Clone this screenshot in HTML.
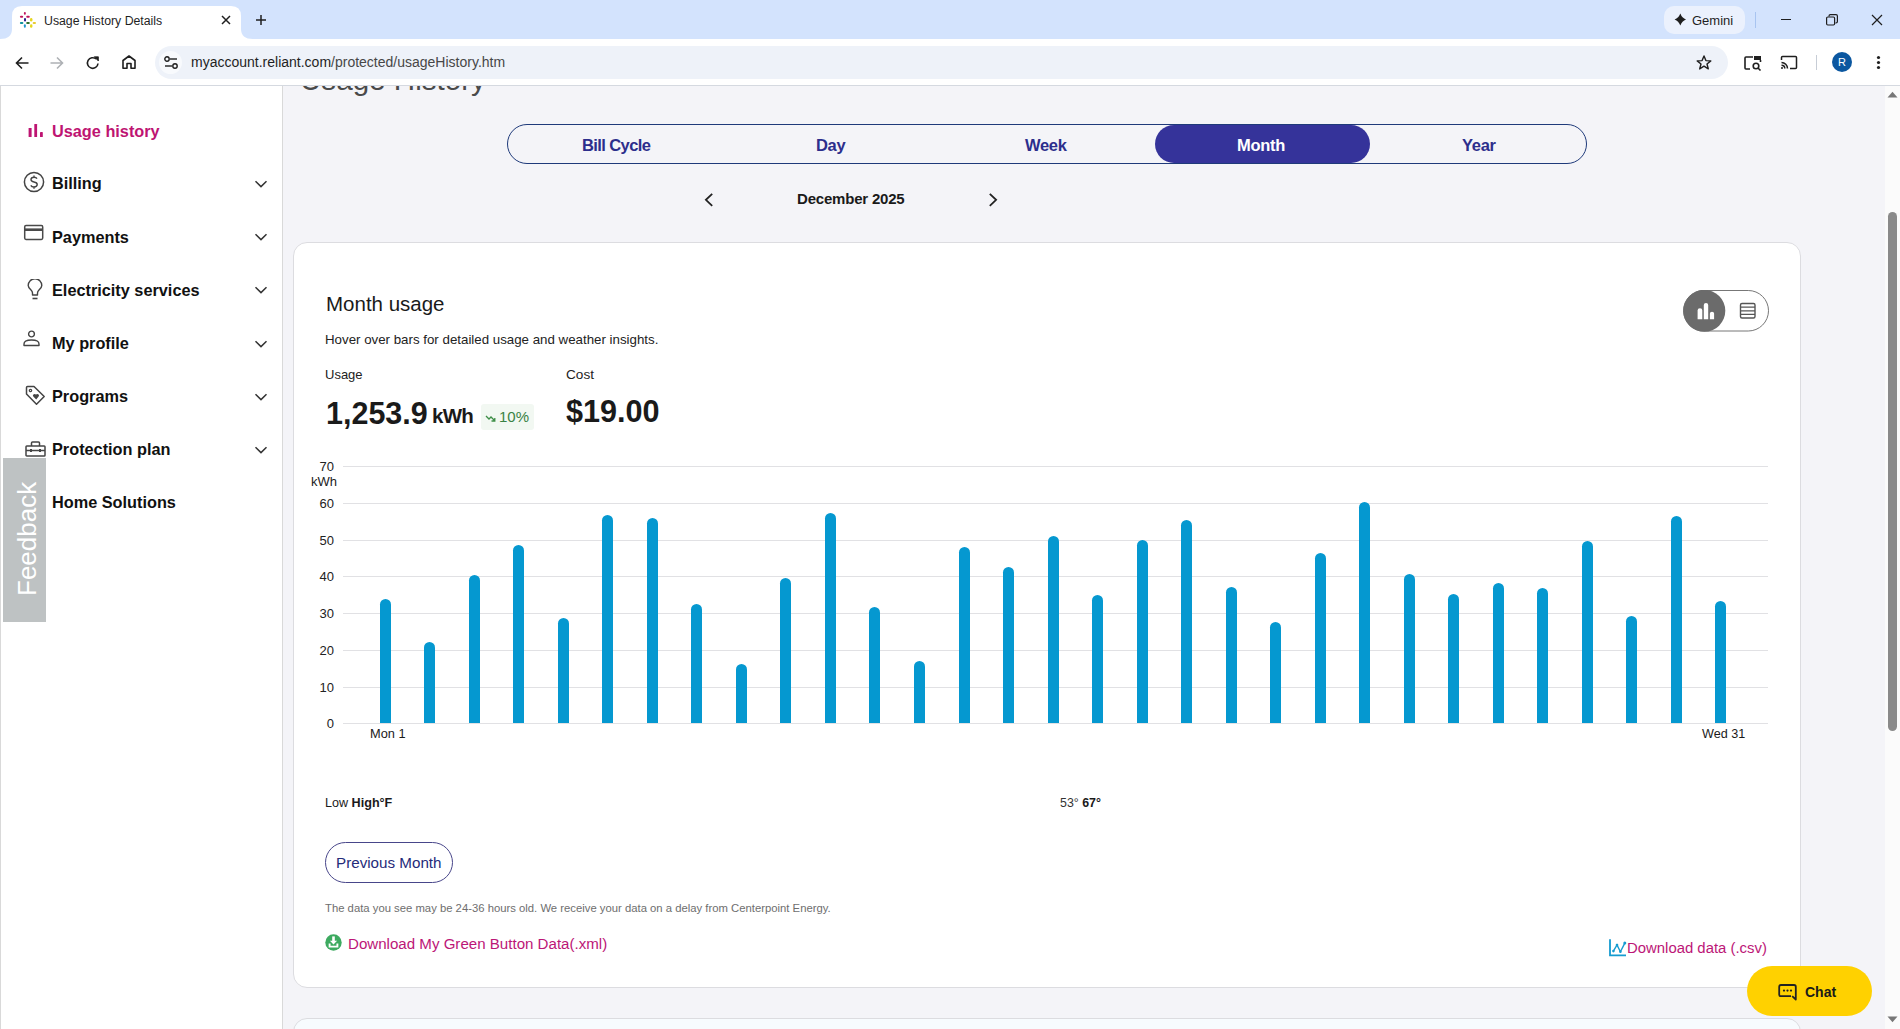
<!DOCTYPE html>
<html><head><meta charset="utf-8">
<style>
*{box-sizing:border-box;margin:0;padding:0}
html,body{width:1900px;height:1029px;overflow:hidden;background:#fff;font-family:"Liberation Sans",sans-serif;}
.a{position:absolute}
.t{position:absolute;white-space:nowrap;line-height:1}
#strip{left:0;top:0;width:1900px;height:39px;background:#D3E3FD}
#toolbar{left:0;top:39px;width:1900px;height:46px;background:#fff}
#tbline{left:0;top:85px;width:1900px;height:1px;background:#D5D9E0}
#page{left:0;top:86px;width:1900px;height:943px;background:#F4F4F8;overflow:hidden}
#side{left:0;top:86px;width:283px;height:943px;background:#fff;border-right:1px solid #D9D9D9;border-left:1px solid #D9D9D9}
.nav{position:absolute;left:52px;font-weight:bold;font-size:16.3px;color:#111;white-space:nowrap;line-height:1}
.chev{position:absolute;left:254px;width:14px;height:8px}
#card{left:293px;top:242px;width:1508px;height:746px;background:#fff;border:1px solid #DCDCE0;border-radius:14px}
#card2{left:293px;top:1018px;width:1508px;height:60px;background:#F7FBFE;border:1px solid #DCDCE0;border-radius:14px}
.grid{position:absolute;left:343px;width:1425px;height:1px;background:#E1E1E4}
.ylab{position:absolute;width:40px;left:294px;text-align:right;font-size:13px;color:#222;line-height:1}
.bar{position:absolute;width:11px;background:#0598D0;border-radius:5.5px 5.5px 0 0}
</style></head><body>
<!-- browser chrome -->
<div id="strip" class="a"></div>
<div id="toolbar" class="a"></div>
<div id="tbline" class="a"></div>
<svg class="a" style="left:0;top:0" width="260" height="40" viewBox="0 0 260 40">
<path d="M0 39 Q12 39 12 29 L12 16 Q12 6 22 6 L231 6 Q241 6 241 16 L241 29 Q241 39 253 39 Z" fill="#fff"/>
</svg>
<!-- favicon -->
<svg class="a" style="left:15px;top:8px" width="25" height="24" viewBox="0 0 25 24"><rect x="8.9" y="4" width="1.9" height="2.8" rx="1.0" fill="#C0145E"/><rect x="4.9" y="7.7" width="3.3" height="2.1" rx="1.1" fill="#C0145E"/><rect x="11.2" y="7.7" width="3.6" height="2.1" rx="1.1" fill="#C0145E"/><rect x="9" y="10" width="2.0" height="3.5" rx="1.0" fill="#2A1A8A"/><rect x="4.9" y="13.9" width="3.5" height="2.1" rx="1.0" fill="#10939E"/><rect x="11.2" y="13.9" width="3.6" height="2.1" rx="1.0" fill="#2C6E2E"/><rect x="8.9" y="16.3" width="1.9" height="3.5" rx="1.0" fill="#1F95CC"/><rect x="15" y="10" width="2.4" height="3.5" rx="1.2" fill="#E5D520"/><rect x="17.7" y="13.9" width="3.3" height="2.1" rx="1.0" fill="#E8CC30"/><rect x="15" y="16.3" width="2.4" height="3.5" rx="1.2" fill="#E5D520"/></svg>
<div class="t" style="left:44px;top:15px;font-size:12.3px;color:#1F1F1F">Usage History Details</div>
<svg class="a" style="left:221px;top:15px" width="10" height="10" viewBox="0 0 10 10"><path d="M1 1L9 9M9 1L1 9" stroke="#1F1F1F" stroke-width="1.5"/></svg>
<svg class="a" style="left:256px;top:15px" width="10" height="10" viewBox="0 0 10 10"><path d="M5 0V10M0 5H10" stroke="#1F1F1F" stroke-width="1.5"/></svg>
<!-- gemini -->
<div class="a" style="left:1664px;top:6px;width:81px;height:28px;border-radius:10px;background:#EBF1FD"></div>
<svg class="a" style="left:1674px;top:13px" width="13" height="13" viewBox="0 0 13 13"><path d="M6.3 0.5 Q8 5 12 6.5 Q8 8 6.3 12.5 Q4.6 8 0.6 6.5 Q4.6 5 6.3 0.5Z" fill="#1F1F1F"/></svg>
<div class="t" style="left:1692px;top:14px;font-size:13px;color:#1F1F1F">Gemini</div>
<div class="a" style="left:1755px;top:12px;width:1px;height:16px;background:#A8C4F0"></div>
<div class="a" style="left:1781px;top:19px;width:10px;height:1px;background:#1F1F1F"></div>
<svg class="a" style="left:1826px;top:14px" width="12" height="12" viewBox="0 0 12 12"><rect x="0.6" y="3" width="8" height="8" rx="1.2" fill="none" stroke="#1F1F1F" stroke-width="1.2"/><path d="M3 2.6 V2 Q3 0.6 4.4 0.6 H10 Q11.4 0.6 11.4 2 V7.6 Q11.4 9 10 9 H9.4" fill="none" stroke="#1F1F1F" stroke-width="1.2"/></svg>
<svg class="a" style="left:1871px;top:14px" width="12" height="12" viewBox="0 0 12 12"><path d="M1 1L11 11M11 1L1 11" stroke="#1F1F1F" stroke-width="1.2"/></svg>
<!-- toolbar icons -->
<svg class="a" style="left:14px;top:55px" width="16" height="16" viewBox="0 0 16 16"><path d="M14.5 8H2.5M8 2.5L2.5 8L8 13.5" fill="none" stroke="#1F1F1F" stroke-width="1.6"/></svg>
<svg class="a" style="left:49px;top:55px" width="16" height="16" viewBox="0 0 16 16"><path d="M1.5 8H13.5M8 2.5L13.5 8L8 13.5" fill="none" stroke="#AEB1B5" stroke-width="1.6"/></svg>
<svg class="a" style="left:85px;top:55px" width="16" height="16" viewBox="0 0 16 16"><path d="M13 8.5 A5.3 5.3 0 1 1 11.2 4" fill="none" stroke="#1F1F1F" stroke-width="1.6"/><path d="M9.2 1.8 H13.4 V6 Z" fill="#1F1F1F" stroke="#1F1F1F" stroke-width="0.8"/></svg>
<svg class="a" style="left:121px;top:54px" width="16" height="16" viewBox="0 0 16 16"><path d="M2 14.2 V6.5 L8 2 L14 6.5 V14.2 H10 V9.5 H6 V14.2 Z" fill="none" stroke="#1F1F1F" stroke-width="1.6" stroke-linejoin="round"/></svg>
<div class="a" style="left:155px;top:46px;width:1573px;height:33px;border-radius:17px;background:#EEF2F9"></div>
<div class="a" style="left:159px;top:51px;width:23px;height:23px;border-radius:12px;background:#F8FAFD"></div>
<svg class="a" style="left:164px;top:56px" width="14" height="13" viewBox="0 0 14 13"><circle cx="3" cy="3" r="2.2" fill="none" stroke="#1F1F1F" stroke-width="1.4"/><path d="M6 3H13" stroke="#1F1F1F" stroke-width="1.4"/><circle cx="11" cy="10" r="2.2" fill="none" stroke="#1F1F1F" stroke-width="1.4"/><path d="M1 10H8" stroke="#1F1F1F" stroke-width="1.4"/></svg>
<div class="t" style="left:191px;top:55px;font-size:14px;color:#1F1F1F">myaccount.reliant.com<span style="color:#474747">/protected/usageHistory.htm</span></div>
<svg class="a" style="left:1696px;top:55px" width="16" height="15" viewBox="0 0 16 15"><path d="M8 1 L9.9 5.6 L14.8 5.9 L11 9 L12.3 13.9 L8 11.2 L3.7 13.9 L5 9 L1.2 5.9 L6.1 5.6 Z" fill="none" stroke="#1F1F1F" stroke-width="1.4" stroke-linejoin="round"/></svg>
<svg class="a" style="left:1744px;top:55px" width="19" height="16" viewBox="0 0 19 16"><path d="M6 14 H2 Q1 14 1 13 V3 Q1 2 2 2 H9" fill="none" stroke="#1F1F1F" stroke-width="1.6"/><rect x="10" y="1" width="7" height="4" fill="#1F1F1F"/><path d="M16.5 5 V7" stroke="#1F1F1F" stroke-width="1.6"/><circle cx="12" cy="11" r="2.8" fill="none" stroke="#1F1F1F" stroke-width="1.6"/><path d="M14 13 L16.5 15.5" stroke="#1F1F1F" stroke-width="1.6"/></svg>
<svg class="a" style="left:1780px;top:55px" width="18" height="15" viewBox="0 0 18 15"><path d="M1.5 5 V2.5 Q1.5 1.5 2.5 1.5 H15.5 Q16.5 1.5 16.5 2.5 V12.5 Q16.5 13.5 15.5 13.5 H10" fill="none" stroke="#1F1F1F" stroke-width="1.5"/><path d="M1.5 7.5 A6 6 0 0 1 7.5 13.5 M1.5 10.2 A3.3 3.3 0 0 1 4.8 13.5" fill="none" stroke="#1F1F1F" stroke-width="1.5"/><circle cx="2" cy="13" r="1" fill="#1F1F1F"/></svg>
<div class="a" style="left:1816px;top:55px;width:1px;height:15px;background:#C7CDD6"></div>
<div class="a" style="left:1832px;top:52px;width:20px;height:20px;border-radius:10px;background:#0B57A0"></div>
<div class="t" style="left:1838px;top:57px;font-size:11px;color:#fff">R</div>
<svg class="a" style="left:1876px;top:55px" width="5" height="15" viewBox="0 0 5 15"><circle cx="2.5" cy="2.5" r="1.6" fill="#1F1F1F"/><circle cx="2.5" cy="7.5" r="1.6" fill="#1F1F1F"/><circle cx="2.5" cy="12.5" r="1.6" fill="#1F1F1F"/></svg>


<div id="page" class="a"></div>
<div id="side" class="a"></div>
<!-- sidebar -->
<svg class="a" style="left:28px;top:124px" width="16" height="14" viewBox="0 0 16 14"><rect x="0.6" y="4" width="3" height="9.1" rx="0.4" fill="#BE1472"/><rect x="6.3" y="0" width="2.8" height="13.1" rx="0.4" fill="#BE1472"/><rect x="12" y="8" width="2.8" height="5.1" rx="0.4" fill="#BE1472"/></svg>
<div class="nav" style="top:123px;color:#BE1472">Usage history</div>
<svg class="a" style="left:23px;top:171px" width="22" height="22" viewBox="0 0 22 22"><circle cx="11" cy="11" r="9.6" fill="none" stroke="#444" stroke-width="1.5"/><path d="M14 7.6 Q13.2 6.2 11 6.2 Q8 6.2 8 8.6 Q8 10.6 11 11 Q14.2 11.4 14.2 13.6 Q14.2 16 11 16 Q8.6 16 7.8 14.4 M11 4.4V6.2 M11 16V17.8" fill="none" stroke="#444" stroke-width="1.4"/></svg>
<div class="nav" style="top:175px">Billing</div><svg class="chev" style="top:180px" viewBox="0 0 14 8"><path d="M1.5 1.2L7 6.6L12.5 1.2" fill="none" stroke="#333" stroke-width="1.5"/></svg>
<svg class="a" style="left:23px;top:224px" width="22" height="17" viewBox="0 0 22 17"><rect x="1.7" y="1.6" width="18" height="13.8" rx="1.3" fill="none" stroke="#4A4A4A" stroke-width="1.5"/><rect x="1.7" y="4.4" width="18" height="2.6" fill="#4A4A4A"/></svg>
<div class="nav" style="top:229px">Payments</div><svg class="chev" style="top:233px" viewBox="0 0 14 8"><path d="M1.5 1.2L7 6.6L12.5 1.2" fill="none" stroke="#333" stroke-width="1.5"/></svg>
<svg class="a" style="left:27px;top:279px" width="16" height="22" viewBox="0 0 16 22"><path d="M5.5 16 V14 Q5.5 12.5 4 11 Q1.2 8.5 1.2 6.5 A6.8 6.8 0 0 1 14.8 6.5 Q14.8 8.5 12 11 Q10.5 12.5 10.5 14 V16 Z" fill="none" stroke="#444" stroke-width="1.4" stroke-linejoin="round"/><path d="M5.5 19.5 H10.5" stroke="#444" stroke-width="1.6"/></svg>
<div class="nav" style="top:282px">Electricity services</div><svg class="chev" style="top:286px" viewBox="0 0 14 8"><path d="M1.5 1.2L7 6.6L12.5 1.2" fill="none" stroke="#333" stroke-width="1.5"/></svg>
<svg class="a" style="left:23px;top:330px" width="18" height="17" viewBox="0 0 18 17"><circle cx="8.5" cy="4" r="2.9" fill="none" stroke="#444" stroke-width="1.4"/><path d="M1 15.5 V14 Q1 10 8.5 10 Q16 10 16 14 V15.5 Z" fill="none" stroke="#444" stroke-width="1.4" stroke-linejoin="round"/></svg>
<div class="nav" style="top:335px">My profile</div><svg class="chev" style="top:340px" viewBox="0 0 14 8"><path d="M1.5 1.2L7 6.6L12.5 1.2" fill="none" stroke="#333" stroke-width="1.5"/></svg>
<svg class="a" style="left:25px;top:385px" width="21" height="21" viewBox="0 0 21 21"><path d="M1.5 2.5 Q1.5 1.5 2.5 1.5 H9 L19.2 11.5 L11.5 19.2 L1.5 9 Z" fill="none" stroke="#444" stroke-width="1.5" stroke-linejoin="round"/><circle cx="5.5" cy="5.5" r="1.2" fill="none" stroke="#444" stroke-width="1.2"/><path d="M11.2 14.5 L8.3 11.6 Q7.3 10.4 8.4 9.4 Q9.6 8.4 11 9.6 Q12.4 8.4 13.6 9.4 Q14.6 10.6 13.4 11.8 Z" fill="#444"/></svg>
<div class="nav" style="top:388px">Programs</div><svg class="chev" style="top:393px" viewBox="0 0 14 8"><path d="M1.5 1.2L7 6.6L12.5 1.2" fill="none" stroke="#333" stroke-width="1.5"/></svg>
<svg class="a" style="left:25px;top:441px" width="21" height="16" viewBox="0 0 21 16"><rect x="1" y="5" width="19" height="10" rx="0.8" fill="none" stroke="#444" stroke-width="1.5"/><path d="M6.5 5 V2 Q6.5 1 7.5 1 H13.5 Q14.5 1 14.5 2 V5 M1 9.5 H20" fill="none" stroke="#444" stroke-width="1.5"/><rect x="5" y="8" width="2" height="3" fill="#444"/><rect x="14" y="8" width="2" height="3" fill="#444"/></svg>
<div class="nav" style="top:441px">Protection plan</div><svg class="chev" style="top:446px" viewBox="0 0 14 8"><path d="M1.5 1.2L7 6.6L12.5 1.2" fill="none" stroke="#333" stroke-width="1.5"/></svg>
<div class="nav" style="top:494px">Home Solutions</div>
<div class="a" style="left:3px;top:458px;width:43px;height:164px;background:#BEC2C3"></div>
<div class="t" style="left:14px;top:596px;font-size:26px;color:#fff;transform-origin:0 0;transform:rotate(-90deg)">Feedback</div>


<!-- main -->
<div class="a" style="left:283px;top:86px;width:600px;height:20px;overflow:hidden"><div class="t" style="left:17px;top:-21px;font-size:29.6px;color:#4A4A4A;font-weight:normal">Usage History</div></div>
<div class="a" style="left:507px;top:124px;width:1080px;height:40px;border:1.5px solid #1F3A7A;border-radius:20px"></div>
<div class="a" style="left:1155px;top:125px;width:215px;height:38px;border-radius:19px;background:#35339A"></div>
<div class="t" style="left:582px;top:137px;font-size:16.5px;font-weight:bold;color:#2C2E8C;letter-spacing:-0.6px">Bill Cycle</div>
<div class="t" style="left:816px;top:137px;font-size:16.5px;font-weight:bold;color:#2C2E8C;letter-spacing:-0.3px">Day</div>
<div class="t" style="left:1025px;top:137px;font-size:16.5px;font-weight:bold;color:#2C2E8C;letter-spacing:-0.3px">Week</div>
<div class="t" style="left:1237px;top:137px;font-size:16.5px;font-weight:bold;color:#fff;letter-spacing:-0.3px">Month</div>
<div class="t" style="left:1462px;top:137px;font-size:16.5px;font-weight:bold;color:#2C2E8C;letter-spacing:-0.3px">Year</div>
<svg class="a" style="left:703px;top:192px" width="12" height="15" viewBox="0 0 12 15"><path d="M9.2 1.8L2.9 7.8L9.2 13.8" fill="none" stroke="#222" stroke-width="1.8"/></svg>
<svg class="a" style="left:987px;top:192px" width="12" height="15" viewBox="0 0 12 15"><path d="M2.8 1.8L9.1 7.8L2.8 13.8" fill="none" stroke="#222" stroke-width="1.8"/></svg>
<div class="t" style="left:797px;top:190.5px;font-size:15px;font-weight:bold;color:#1A1A1A;letter-spacing:-0.2px">December 2025</div>

<div id="card" class="a"></div>
<div id="card2" class="a"></div>
<div class="t" style="left:326px;top:294px;font-size:20.5px;color:#1A1A1A">Month usage</div>
<div class="t" style="left:325px;top:333px;font-size:13.3px;color:#222">Hover over bars for detailed usage and weather insights.</div>
<div class="t" style="left:325px;top:368px;font-size:13px;color:#222">Usage</div>
<div class="t" style="left:566px;top:368px;font-size:13.6px;color:#222">Cost</div>
<div class="t" style="left:326px;top:398px;font-size:30.5px;font-weight:bold;color:#1A1A1A">1,253.9</div>
<div class="t" style="left:432px;top:405.5px;font-size:20.5px;font-weight:bold;color:#1A1A1A;letter-spacing:-0.7px">kWh</div>
<div class="a" style="left:481px;top:404px;width:53px;height:26px;border-radius:3px;background:#F2F8F2"></div>
<svg class="a" style="left:485px;top:414px" width="11" height="9" viewBox="0 0 11 9"><path d="M1 2 L4 5 L6 3 L9.5 6.5 M6.5 7 H9.8 V4" fill="none" stroke="#3E8E47" stroke-width="1.3"/></svg>
<div class="t" style="left:499px;top:409px;font-size:15px;color:#3A8245">10%</div>
<div class="t" style="left:566px;top:396px;font-size:30.6px;font-weight:bold;color:#1A1A1A">$19.00</div>

<svg class="a" style="left:1683px;top:290px" width="86" height="42" viewBox="0 0 86 42"><rect x="0.5" y="0.5" width="85" height="40.5" rx="20.25" fill="#fff" stroke="#777" stroke-width="1"/><circle cx="21.3" cy="20.8" r="21" fill="#6B6B6B"/>
<path d="M14.6 29.2V20.2Q14.6 18.2 16.95 18.2Q19.3 18.2 19.3 20.2V29.2Z M20.8 29.2V15Q20.8 13 23 13Q25.2 13 25.2 15V29.2Z M26.9 29.2V23.6Q26.9 21.8 29 21.8Q31.1 21.8 31.1 23.6V29.2Z" fill="#fff"/>
<rect x="57.5" y="13.5" width="14.5" height="14.5" rx="1.5" fill="none" stroke="#555" stroke-width="1.4"/><path d="M57.5 17.2H72M57.5 20.8H72M57.5 24.4H72" stroke="#555" stroke-width="1.2"/></svg>
<div class="grid" style="top:466px"></div><div class="grid" style="top:503px"></div><div class="grid" style="top:539.5px"></div><div class="grid" style="top:576px"></div><div class="grid" style="top:613px"></div><div class="grid" style="top:650px"></div><div class="grid" style="top:687px"></div><div class="grid" style="top:723px"></div><div class="ylab" style="top:460.0px">70</div><div class="ylab" style="top:497.0px">60</div><div class="ylab" style="top:533.5px">50</div><div class="ylab" style="top:570.0px">40</div><div class="ylab" style="top:607.0px">30</div><div class="ylab" style="top:644.0px">20</div><div class="ylab" style="top:681.0px">10</div><div class="ylab" style="top:717.0px">0</div>
<div class="ylab" style="top:475px;left:297px">kWh</div>
<div class="bar" style="left:379.7px;top:598.9px;height:124.1px"></div><div class="bar" style="left:424.2px;top:641.6px;height:81.4px"></div><div class="bar" style="left:468.7px;top:575.1px;height:147.9px"></div><div class="bar" style="left:513.3px;top:545.3px;height:177.7px"></div><div class="bar" style="left:557.8px;top:618.3px;height:104.7px"></div><div class="bar" style="left:602.3px;top:515.0px;height:208.0px"></div><div class="bar" style="left:646.8px;top:517.5px;height:205.5px"></div><div class="bar" style="left:691.3px;top:604.3px;height:118.7px"></div><div class="bar" style="left:735.9px;top:663.8px;height:59.2px"></div><div class="bar" style="left:780.4px;top:577.5px;height:145.5px"></div><div class="bar" style="left:824.9px;top:512.6px;height:210.4px"></div><div class="bar" style="left:869.4px;top:607.3px;height:115.7px"></div><div class="bar" style="left:913.9px;top:660.7px;height:62.3px"></div><div class="bar" style="left:958.5px;top:547.1px;height:175.9px"></div><div class="bar" style="left:1003.0px;top:567.2px;height:155.8px"></div><div class="bar" style="left:1047.5px;top:535.5px;height:187.5px"></div><div class="bar" style="left:1092.0px;top:594.7px;height:128.3px"></div><div class="bar" style="left:1136.5px;top:539.9px;height:183.1px"></div><div class="bar" style="left:1181.1px;top:519.6px;height:203.4px"></div><div class="bar" style="left:1225.6px;top:586.8px;height:136.2px"></div><div class="bar" style="left:1270.1px;top:622.2px;height:100.8px"></div><div class="bar" style="left:1314.6px;top:553.4px;height:169.6px"></div><div class="bar" style="left:1359.1px;top:502.1px;height:220.9px"></div><div class="bar" style="left:1403.7px;top:574.4px;height:148.6px"></div><div class="bar" style="left:1448.2px;top:593.8px;height:129.2px"></div><div class="bar" style="left:1492.7px;top:583.3px;height:139.7px"></div><div class="bar" style="left:1537.2px;top:587.5px;height:135.5px"></div><div class="bar" style="left:1581.7px;top:540.6px;height:182.4px"></div><div class="bar" style="left:1626.3px;top:616.0px;height:107.0px"></div><div class="bar" style="left:1670.8px;top:515.7px;height:207.3px"></div><div class="bar" style="left:1715.3px;top:600.8px;height:122.2px"></div>
<div class="t" style="left:370px;top:728px;font-size:12.8px;color:#1A1A1A">Mon 1</div>
<div class="t" style="left:1702px;top:728px;font-size:12.6px;color:#1A1A1A">Wed 31</div>
<div class="t" style="left:325px;top:797px;font-size:12.6px;color:#1A1A1A">Low <b>High°F</b></div>
<div class="t" style="left:1060px;top:797px;font-size:12.4px;color:#333">53° <b style="color:#1A1A1A">67°</b></div>
<div class="a" style="left:325px;top:842px;width:128px;height:41px;border:1.5px solid #48468A;border-radius:20.5px;background:#fff"></div>
<div class="t" style="left:336px;top:855px;font-size:15.2px;color:#252B7A">Previous Month</div>
<div class="t" style="left:325px;top:903px;font-size:11.3px;color:#6E6E6E">The data you see may be 24-36 hours old. We receive your data on a delay from Centerpoint Energy.</div>
<svg class="a" style="left:325px;top:934px" width="17" height="17" viewBox="0 0 17 17"><circle cx="8.5" cy="8.5" r="8.2" fill="#3DAA60"/><rect x="7.2" y="2.4" width="2.6" height="5" fill="#fff"/><path d="M4.9 6.8H12.1L8.5 10.4Z" fill="#fff"/><path d="M4.6 9.6V12.6H12.4V9.6" fill="none" stroke="#fff" stroke-width="1.9"/></svg>
<div class="t" style="left:348px;top:936px;font-size:15.1px;color:#BC1677">Download My Green Button Data(.xml)</div>
<svg class="a" style="left:1608px;top:939px" width="19" height="18" viewBox="0 0 19 18"><path d="M2 0.2V16.4H18" fill="none" stroke="#159BD0" stroke-width="1.8"/><path d="M5.4 12.1L9 6L12.4 12.8L16.8 4.1" fill="none" stroke="#159BD0" stroke-width="1.4"/><circle cx="5.4" cy="12.1" r="1.3" fill="#159BD0"/><circle cx="9" cy="6" r="1.3" fill="#159BD0"/><circle cx="12.4" cy="12.8" r="1.3" fill="#159BD0"/><circle cx="16.8" cy="4.1" r="1.5" fill="#159BD0"/></svg>
<div class="t" style="left:1627px;top:941px;font-size:14.9px;color:#BC1677">Download data (.csv)</div>
<div class="a" style="left:1747px;top:966px;width:125px;height:50px;border-radius:25px;background:#FFD100"></div>
<svg class="a" style="left:1778px;top:984px" width="20" height="17" viewBox="0 0 20 17"><path d="M13 12.2 H3 Q1.2 12.2 1.2 10.4 V2.8 Q1.2 1 3 1 H16 Q17.8 1 17.8 2.8 V15.5 L14.2 12.2" fill="none" stroke="#222" stroke-width="1.8" stroke-linejoin="round"/><circle cx="6" cy="6.6" r="1.1" fill="#222"/><circle cx="9.5" cy="6.6" r="1.1" fill="#222"/><circle cx="13" cy="6.6" r="1.1" fill="#222"/></svg>
<div class="t" style="left:1805px;top:985px;font-size:14px;font-weight:bold;color:#1A1A1A">Chat</div>
<!-- scrollbar -->
<div class="a" style="left:1885px;top:86px;width:15px;height:943px;background:#FBFBFB"></div>
<svg class="a" style="left:1887px;top:91px" width="11" height="7" viewBox="0 0 11 7"><path d="M0.5 6.5L5.5 0.8L10.5 6.5Z" fill="#777"/></svg>
<div class="a" style="left:1888px;top:212px;width:9px;height:519px;border-radius:4.5px;background:#8A8A8A"></div>
<svg class="a" style="left:1887px;top:1016px" width="11" height="7" viewBox="0 0 11 7"><path d="M0.5 0.5L5.5 6.2L10.5 0.5Z" fill="#777"/></svg>
</body></html>
